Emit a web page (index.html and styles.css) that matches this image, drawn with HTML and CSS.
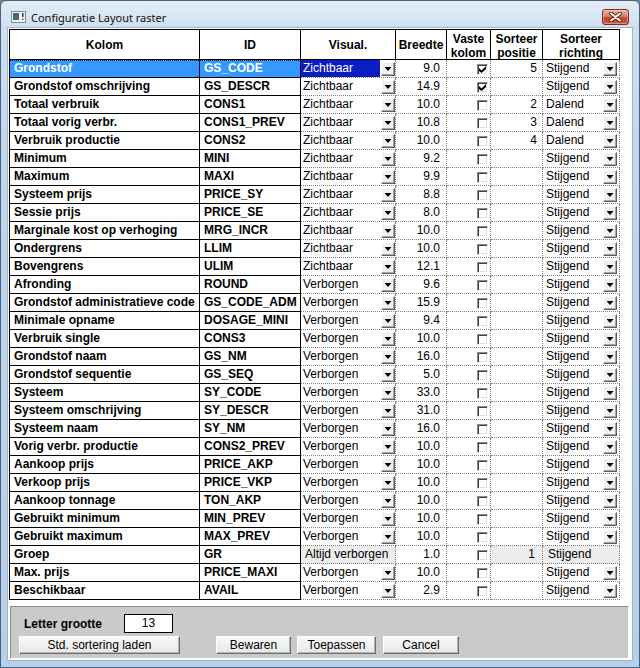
FILE: index.html
```html
<!DOCTYPE html>
<html lang="nl">
<head>
<meta charset="utf-8">
<title>Configuratie Layout raster</title>
<link rel="stylesheet" href="styles.css">
</head>
<body>
<div class="window">
  <div class="titlebar">
    <svg class="app-icon" width="15" height="12" viewBox="0 0 15 12">
      <rect x="0.5" y="0.5" width="14" height="11" fill="#eef2f6" stroke="#7d8ea2"/>
      <rect x="2" y="2" width="6" height="7" fill="#3f6f6c"/>
      <rect x="11" y="2" width="1.5" height="4" fill="#333"/>
      <rect x="11" y="7.5" width="1.5" height="1.5" fill="#c03020"/>
    </svg>
    <span class="title">Configuratie Layout raster</span>
    <div class="close">
      <svg width="13" height="10" viewBox="0 0 13 10">
        <path d="M2 1.5 L11 8.5 M11 1.5 L2 8.5" stroke="#6a2418" stroke-width="4" stroke-linecap="round"/>
        <path d="M2 1.5 L11 8.5 M11 1.5 L2 8.5" stroke="#ffffff" stroke-width="2" stroke-linecap="round"/>
      </svg>
    </div>
  </div>
  <div class="client">
    <div class="grid">
      <div class="row head">
        <div class="c">Kolom</div>
        <div class="c">ID</div>
        <div class="c">Visual.</div>
        <div class="c">Breedte</div>
        <div class="c two">Vaste<br>kolom</div>
        <div class="c two">Sorteer<br>positie</div>
        <div class="c two">Sorteer<br>richting</div>
      </div>
      <div class="row sel"><div class="c k">Grondstof</div><div class="c i">GS_CODE</div><div class="c v"><span class="t">Zichtbaar</span><i class="dd"></i></div><div class="c b">9.0</div><div class="c x"><i class="cb on"></i></div><div class="c p">5</div><div class="c r"><span class="t">Stijgend</span><i class="dd"></i></div></div>
      <div class="row"><div class="c k">Grondstof omschrijving</div><div class="c i">GS_DESCR</div><div class="c v"><span class="t">Zichtbaar</span><i class="dd"></i></div><div class="c b">14.9</div><div class="c x"><i class="cb on"></i></div><div class="c p"></div><div class="c r"><span class="t">Stijgend</span><i class="dd"></i></div></div>
      <div class="row"><div class="c k">Totaal verbruik</div><div class="c i">CONS1</div><div class="c v"><span class="t">Zichtbaar</span><i class="dd"></i></div><div class="c b">10.0</div><div class="c x"><i class="cb"></i></div><div class="c p">2</div><div class="c r"><span class="t">Dalend</span><i class="dd"></i></div></div>
      <div class="row"><div class="c k">Totaal vorig verbr.</div><div class="c i">CONS1_PREV</div><div class="c v"><span class="t">Zichtbaar</span><i class="dd"></i></div><div class="c b">10.8</div><div class="c x"><i class="cb"></i></div><div class="c p">3</div><div class="c r"><span class="t">Dalend</span><i class="dd"></i></div></div>
      <div class="row"><div class="c k">Verbruik productie</div><div class="c i">CONS2</div><div class="c v"><span class="t">Zichtbaar</span><i class="dd"></i></div><div class="c b">10.0</div><div class="c x"><i class="cb"></i></div><div class="c p">4</div><div class="c r"><span class="t">Dalend</span><i class="dd"></i></div></div>
      <div class="row"><div class="c k">Minimum</div><div class="c i">MINI</div><div class="c v"><span class="t">Zichtbaar</span><i class="dd"></i></div><div class="c b">9.2</div><div class="c x"><i class="cb"></i></div><div class="c p"></div><div class="c r"><span class="t">Stijgend</span><i class="dd"></i></div></div>
      <div class="row"><div class="c k">Maximum</div><div class="c i">MAXI</div><div class="c v"><span class="t">Zichtbaar</span><i class="dd"></i></div><div class="c b">9.9</div><div class="c x"><i class="cb"></i></div><div class="c p"></div><div class="c r"><span class="t">Stijgend</span><i class="dd"></i></div></div>
      <div class="row"><div class="c k">Systeem prijs</div><div class="c i">PRICE_SY</div><div class="c v"><span class="t">Zichtbaar</span><i class="dd"></i></div><div class="c b">8.8</div><div class="c x"><i class="cb"></i></div><div class="c p"></div><div class="c r"><span class="t">Stijgend</span><i class="dd"></i></div></div>
      <div class="row"><div class="c k">Sessie prijs</div><div class="c i">PRICE_SE</div><div class="c v"><span class="t">Zichtbaar</span><i class="dd"></i></div><div class="c b">8.0</div><div class="c x"><i class="cb"></i></div><div class="c p"></div><div class="c r"><span class="t">Stijgend</span><i class="dd"></i></div></div>
      <div class="row"><div class="c k">Marginale kost op verhoging</div><div class="c i">MRG_INCR</div><div class="c v"><span class="t">Zichtbaar</span><i class="dd"></i></div><div class="c b">10.0</div><div class="c x"><i class="cb"></i></div><div class="c p"></div><div class="c r"><span class="t">Stijgend</span><i class="dd"></i></div></div>
      <div class="row"><div class="c k">Ondergrens</div><div class="c i">LLIM</div><div class="c v"><span class="t">Zichtbaar</span><i class="dd"></i></div><div class="c b">10.0</div><div class="c x"><i class="cb"></i></div><div class="c p"></div><div class="c r"><span class="t">Stijgend</span><i class="dd"></i></div></div>
      <div class="row"><div class="c k">Bovengrens</div><div class="c i">ULIM</div><div class="c v"><span class="t">Zichtbaar</span><i class="dd"></i></div><div class="c b">12.1</div><div class="c x"><i class="cb"></i></div><div class="c p"></div><div class="c r"><span class="t">Stijgend</span><i class="dd"></i></div></div>
      <div class="row"><div class="c k">Afronding</div><div class="c i">ROUND</div><div class="c v"><span class="t">Verborgen</span><i class="dd"></i></div><div class="c b">9.6</div><div class="c x"><i class="cb"></i></div><div class="c p"></div><div class="c r"><span class="t">Stijgend</span><i class="dd"></i></div></div>
      <div class="row"><div class="c k">Grondstof administratieve code</div><div class="c i">GS_CODE_ADM</div><div class="c v"><span class="t">Verborgen</span><i class="dd"></i></div><div class="c b">15.9</div><div class="c x"><i class="cb"></i></div><div class="c p"></div><div class="c r"><span class="t">Stijgend</span><i class="dd"></i></div></div>
      <div class="row"><div class="c k">Minimale opname</div><div class="c i">DOSAGE_MINI</div><div class="c v"><span class="t">Verborgen</span><i class="dd"></i></div><div class="c b">9.4</div><div class="c x"><i class="cb"></i></div><div class="c p"></div><div class="c r"><span class="t">Stijgend</span><i class="dd"></i></div></div>
      <div class="row"><div class="c k">Verbruik single</div><div class="c i">CONS3</div><div class="c v"><span class="t">Verborgen</span><i class="dd"></i></div><div class="c b">10.0</div><div class="c x"><i class="cb"></i></div><div class="c p"></div><div class="c r"><span class="t">Stijgend</span><i class="dd"></i></div></div>
      <div class="row"><div class="c k">Grondstof naam</div><div class="c i">GS_NM</div><div class="c v"><span class="t">Verborgen</span><i class="dd"></i></div><div class="c b">16.0</div><div class="c x"><i class="cb"></i></div><div class="c p"></div><div class="c r"><span class="t">Stijgend</span><i class="dd"></i></div></div>
      <div class="row"><div class="c k">Grondstof sequentie</div><div class="c i">GS_SEQ</div><div class="c v"><span class="t">Verborgen</span><i class="dd"></i></div><div class="c b">5.0</div><div class="c x"><i class="cb"></i></div><div class="c p"></div><div class="c r"><span class="t">Stijgend</span><i class="dd"></i></div></div>
      <div class="row"><div class="c k">Systeem</div><div class="c i">SY_CODE</div><div class="c v"><span class="t">Verborgen</span><i class="dd"></i></div><div class="c b">33.0</div><div class="c x"><i class="cb"></i></div><div class="c p"></div><div class="c r"><span class="t">Stijgend</span><i class="dd"></i></div></div>
      <div class="row"><div class="c k">Systeem omschrijving</div><div class="c i">SY_DESCR</div><div class="c v"><span class="t">Verborgen</span><i class="dd"></i></div><div class="c b">31.0</div><div class="c x"><i class="cb"></i></div><div class="c p"></div><div class="c r"><span class="t">Stijgend</span><i class="dd"></i></div></div>
      <div class="row"><div class="c k">Systeem naam</div><div class="c i">SY_NM</div><div class="c v"><span class="t">Verborgen</span><i class="dd"></i></div><div class="c b">16.0</div><div class="c x"><i class="cb"></i></div><div class="c p"></div><div class="c r"><span class="t">Stijgend</span><i class="dd"></i></div></div>
      <div class="row"><div class="c k">Vorig verbr. productie</div><div class="c i">CONS2_PREV</div><div class="c v"><span class="t">Verborgen</span><i class="dd"></i></div><div class="c b">10.0</div><div class="c x"><i class="cb"></i></div><div class="c p"></div><div class="c r"><span class="t">Stijgend</span><i class="dd"></i></div></div>
      <div class="row"><div class="c k">Aankoop prijs</div><div class="c i">PRICE_AKP</div><div class="c v"><span class="t">Verborgen</span><i class="dd"></i></div><div class="c b">10.0</div><div class="c x"><i class="cb"></i></div><div class="c p"></div><div class="c r"><span class="t">Stijgend</span><i class="dd"></i></div></div>
      <div class="row"><div class="c k">Verkoop prijs</div><div class="c i">PRICE_VKP</div><div class="c v"><span class="t">Verborgen</span><i class="dd"></i></div><div class="c b">10.0</div><div class="c x"><i class="cb"></i></div><div class="c p"></div><div class="c r"><span class="t">Stijgend</span><i class="dd"></i></div></div>
      <div class="row"><div class="c k">Aankoop tonnage</div><div class="c i">TON_AKP</div><div class="c v"><span class="t">Verborgen</span><i class="dd"></i></div><div class="c b">10.0</div><div class="c x"><i class="cb"></i></div><div class="c p"></div><div class="c r"><span class="t">Stijgend</span><i class="dd"></i></div></div>
      <div class="row"><div class="c k">Gebruikt minimum</div><div class="c i">MIN_PREV</div><div class="c v"><span class="t">Verborgen</span><i class="dd"></i></div><div class="c b">10.0</div><div class="c x"><i class="cb"></i></div><div class="c p"></div><div class="c r"><span class="t">Stijgend</span><i class="dd"></i></div></div>
      <div class="row"><div class="c k">Gebruikt maximum</div><div class="c i">MAX_PREV</div><div class="c v"><span class="t">Verborgen</span><i class="dd"></i></div><div class="c b">10.0</div><div class="c x"><i class="cb"></i></div><div class="c p"></div><div class="c r"><span class="t">Stijgend</span><i class="dd"></i></div></div>
      <div class="row grp"><div class="c k">Groep</div><div class="c i">GR</div><div class="c v"><span class="t">Altijd verborgen</span></div><div class="c b">1.0</div><div class="c x"><i class="cb"></i></div><div class="c p">1</div><div class="c r"><span class="t">Stijgend</span></div></div>
      <div class="row"><div class="c k">Max. prijs</div><div class="c i">PRICE_MAXI</div><div class="c v"><span class="t">Verborgen</span><i class="dd"></i></div><div class="c b">10.0</div><div class="c x"><i class="cb"></i></div><div class="c p"></div><div class="c r"><span class="t">Stijgend</span><i class="dd"></i></div></div>
      <div class="row"><div class="c k">Beschikbaar</div><div class="c i">AVAIL</div><div class="c v"><span class="t">Verborgen</span><i class="dd"></i></div><div class="c b">2.9</div><div class="c x"><i class="cb"></i></div><div class="c p"></div><div class="c r"><span class="t">Stijgend</span><i class="dd"></i></div></div>
    </div>
    <div class="panel">
      <div class="font-row">
        <span class="lbl">Letter grootte</span>
        <div class="input">13</div>
      </div>
      <div class="btn-row">
        <button class="btn std">Std. sortering laden</button>
        <button class="btn save">Bewaren</button>
        <button class="btn apply">Toepassen</button>
        <button class="btn cancel">Cancel</button>
      </div>
    </div>
  </div>
</div>
</body>
</html>
```
FILE: styles.css
```css
* { box-sizing: border-box; }
html, body { margin: 0; padding: 0; }
body {
  width: 640px;
  height: 668px;
  overflow: hidden;
  background: #6f7f92;
  font-family: "Liberation Sans", Arial, sans-serif;
  font-size: 12px;
  color: #000;
}
.window {
  width: 640px;
  height: 668px;
  display: flex;
  flex-direction: column;
  padding: 0 7px 7px;
  border: 1px solid #4e6079;
  border-radius: 6px 6px 0 0;
  background: linear-gradient(180deg, #e3ecf6 0px, #cfdff0 27px, #c2d7ee 140px, #b6cfea 668px);
}
.titlebar {
  height: 27px;
  flex: none;
  display: flex;
  align-items: flex-start;
  padding: 0 3px;
}
.app-icon { margin-top: 10px; flex: none; }
.title {
  margin: 9px 0 0 5px;
  font-family: "Noto Sans", "Liberation Sans", sans-serif;
  font-size: 11px;
  line-height: 15px;
  color: #111;
}
.close {
  margin: 8px 0 0 auto;
  width: 27px;
  height: 16px;
  border: 1px solid #7c2a1e;
  border-radius: 3px;
  background: linear-gradient(180deg, #eab3a4 0%, #d9806c 45%, #c4462e 55%, #c9553a 100%);
  box-shadow: inset 0 0 0 1px rgba(255,255,255,0.35);
  display: flex;
  align-items: center;
  justify-content: center;
}
.client {
  flex: 1;
  background: #fff;
  padding: 1px 0 0 1px;
  display: flex;
  flex-direction: column;
  box-shadow: 0 0 0 1px #9fb3cb;
}
.grid {
  width: 611px;
  border-left: 1px solid #000;
}
.row {
  display: grid;
  grid-template-columns: 190px 101px 95px 51px 44px 52px 77px;
}
.c {
  height: 18px;
  border-right: 1px dotted #808080;
  border-bottom: 1px dotted #808080;
  line-height: 17px;
  white-space: nowrap;
  overflow: hidden;
}
.k, .i {
  border-right: 1px solid #000;
  border-bottom: 1px solid #000;
  font-weight: bold;
  padding-left: 4px;
}
.head .c {
  height: 31px;
  border: 1px solid #000;
  border-left: 0;
  font-weight: bold;
  text-align: center;
  line-height: 14px;
  display: flex;
  flex-direction: column;
  justify-content: center;
  padding: 0;
}
.head .c.two { justify-content: flex-start; padding-top: 2px; }

.v { display: flex; }
.v .t { flex: 1; padding-left: 2px; }
.v .dd { margin: 2px 0 1px 1px; }
.b { text-align: right; padding-right: 6px; }
.x { padding: 4px 0 0 30px; }
.p { text-align: right; padding-right: 5px; }
.r { display: flex; padding-left: 3px; }
.r .t { flex: 1; }
.r .dd { margin: 2px 2px 1px 0; }

.dd {
  width: 14px;
  height: 14px;
  flex: none;
  background: #f0f0f0;
  border: 1px solid;
  border-color: #ffffff #5e5e5e #5e5e5e #ffffff;
  box-shadow: inset -1px -1px #a8a8a8;
  display: flex;
  align-items: center;
  justify-content: center;
}
.dd::after {
  content: "";
  width: 7px;
  height: 4px;
  background: #000;
  clip-path: polygon(0 0, 100% 0, 50% 100%);
}
.cb {
  width: 11px;
  height: 11px;
  display: flex;
  align-items: center;
  justify-content: center;
  background: #fff;
  border: 1px solid;
  border-color: #8a8a8a #ffffff #ffffff #8a8a8a;
  box-shadow: inset 1px 1px #404040, inset -1px -1px #e2e2e2;
}
.cb.on::after {
  content: "";
  width: 7px;
  height: 7px;
  background: #000;
  clip-path: polygon(0 29%, 36% 64%, 100% 0, 100% 43%, 36% 100%, 0 71%);
}

.sel .k, .sel .i {
  background-color: #3399ff;
  background-image: linear-gradient(90deg, #1a1a1a 50%, transparent 50%);
  background-size: 2px 1px;
  background-repeat: repeat-x;
  background-position: 0 0;
  color: #fff;
}
.sel .v .t { background: #0a1ec4; color: #fff; }

.grp .v, .grp .p, .grp .r { background: #ececec; }
.grp .v .t { padding-left: 4px; }
.grp .p { padding-right: 7px; }
.grp .r { padding-left: 5px; }

.panel {
  margin: 6px 0 0 1px;
  width: 619px;
  height: 53px;
  background: #cacaca;
  border: 1px solid;
  border-color: #8a8a8a #ffffff #ffffff #8a8a8a;
  padding: 7px 0 0 7px;
}
.font-row {
  display: flex;
  align-items: center;
  height: 19px;
}
.lbl {
  width: 100px;
  margin-left: 6px;
  font-weight: bold;
}
.input {
  width: 49px;
  height: 19px;
  border: 1px solid #000;
  background: #fff;
  text-align: center;
  line-height: 17px;
}
.btn-row {
  display: flex;
  margin-top: 3px;
}
.btn {
  height: 18px;
  padding: 0;
  font-family: "Liberation Sans", Arial, sans-serif;
  font-size: 12px;
  line-height: 16px;
  color: #000;
  background: linear-gradient(180deg, #f8f8f8, #e8e8e8);
  border: 1px solid;
  border-color: #ffffff #6e6e6e #6e6e6e #ffffff;
  box-shadow: inset -1px -1px #b4b4b4;
}
.std { width: 161px; margin-left: 1px; }
.save { width: 75px; margin-left: 36px; }
.apply { width: 79px; margin-left: 6px; }
.cancel { width: 76px; margin-left: 7px; }
```
